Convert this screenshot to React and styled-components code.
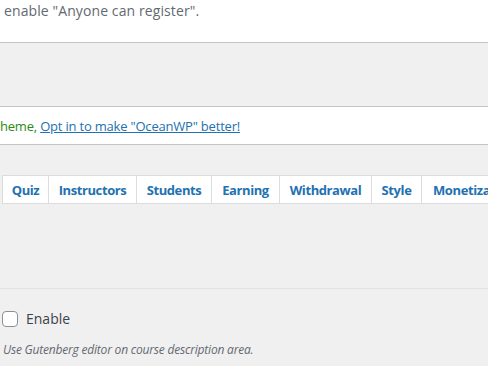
import React from "react";
import styled, { createGlobalStyle } from "styled-components";

const GlobalStyle = createGlobalStyle`
  html, body {
    margin: 0;
    padding: 0;
    background: #f0f0f1;
    overflow: hidden;
  }
  body {
    font-family: "Open Sans", "Noto Sans", sans-serif;
    color: #3c434a;
  }
`;

const Page = styled.div`
  width: 488px;
  height: 366px;
  overflow: hidden;
  background: #f0f0f1;
`;

const TopPanel = styled.div`
  height: 43px;
  background: #fff;
  border-bottom: 1px solid #c3c4c7;
  box-sizing: border-box;
  padding: 3px 0 0 4px;
`;

const Hint = styled.p`
  margin: 0;
  font-size: 14px;
  line-height: 16px;
  color: #646970;
  letter-spacing: 0.1px;
`;

const Spacer = styled.div`
  height: ${(p) => p.h}px;
`;

const Notice = styled.div`
  height: 39px;
  box-sizing: border-box;
  background: #fff;
  border-top: 1px solid #c3c4c7;
  border-bottom: 1px solid #c3c4c7;
  display: flex;
  align-items: center;
  padding-top: 1px;
  font-size: 13px;
  white-space: nowrap;
  letter-spacing: -0.2px;
`;

const Green = styled.span`
  color: #2a8a12;
`;

const Link = styled.a`
  color: #2271b1;
  text-decoration: underline;
`;

const TabBar = styled.div`
  display: flex;
  margin-left: 2px;
  white-space: nowrap;
`;

const Tab = styled.div`
  flex: 0 0 auto;
  width: ${(p) => p.w}px;
  height: 29px;
  box-sizing: border-box;
  background: #fff;
  border: 1px solid #dcdcde;
  border-left: ${(p) => (p.first ? "1px solid #dcdcde" : "none")};
  display: flex;
  align-items: center;
  justify-content: ${(p) => (p.last ? "flex-start" : "center")};
  padding-left: ${(p) => (p.last ? "11px" : "0")};
  font-size: 13px;
  font-weight: 700;
  color: #2271b1;
  letter-spacing: -0.4px;
`;

const Separator = styled.div`
  height: 1px;
  background: #e2e2e4;
`;

const Field = styled.div`
  padding: 20px 0 0 2px;
`;

const CheckRow = styled.label`
  display: flex;
  align-items: center;
  gap: 8px;
  font-size: 14px;
  color: #3c434a;
`;

const Box = styled.span`
  width: 16px;
  height: 16px;
  box-sizing: border-box;
  border: 1px solid #8c8f94;
  border-radius: 4px;
  background: #fff;
`;

const Description = styled.p`
  margin: 13px 0 0 1px;
  font-size: 12px;
  font-style: italic;
  color: #646970;
  letter-spacing: -0.2px;
`;

const tabs = [
  ["Quiz", 47],
  ["Instructors", 88],
  ["Students", 75],
  ["Earning", 68],
  ["Withdrawal", 92],
  ["Style", 50],
  ["Monetization", 110],
];

export default function App() {
  return (
    <Page>
      <GlobalStyle />
      <TopPanel>
        <Hint>enable "Anyone can register".</Hint>
      </TopPanel>
      <Spacer h={63} />
      <Notice>
        <Green>heme,</Green>&nbsp;
        <Link href="#">Opt in to make "OceanWP" better!</Link>
      </Notice>
      <Spacer h={30} />
      <TabBar>
        {tabs.map(([label, w], i) => (
          <Tab key={label} w={w} first={i === 0} last={i === tabs.length - 1}>
            {label}
          </Tab>
        ))}
      </TabBar>
      <Spacer h={84} />
      <Separator />
      <Field>
        <CheckRow>
          <Box />
          Enable
        </CheckRow>
        <Description>Use Gutenberg editor on course description area.</Description>
      </Field>
    </Page>
  );
}
